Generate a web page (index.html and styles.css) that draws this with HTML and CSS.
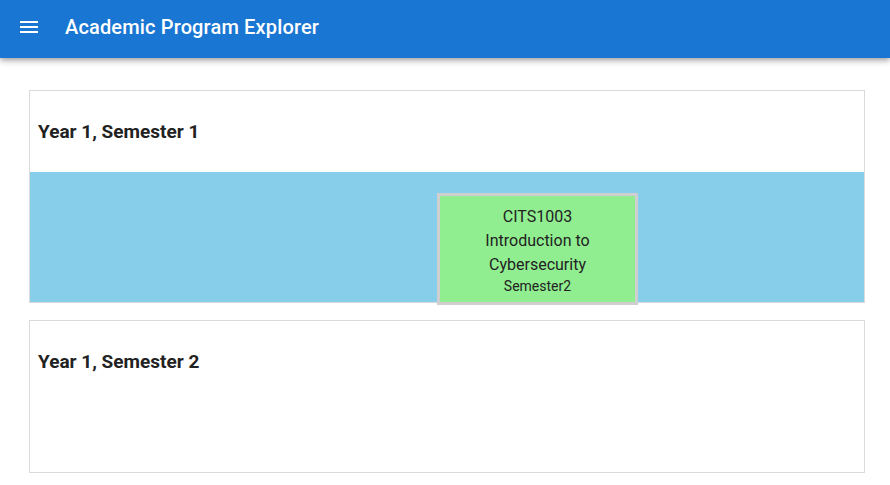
FILE: index.html
```html
<!DOCTYPE html>
<html>
<head>
<meta charset="utf-8">
<link rel="stylesheet" href="styles.css">
</head>
<body>
<header class="appbar">
  <svg class="menu" width="24" height="24" viewBox="0 0 24 24"><path d="M3 18h18v-2H3v2zm0-5h18v-2H3v2zm0-7v2h18V6H3z" fill="#fff"/></svg>
  <h1 class="title">Academic Program Explorer</h1>
</header>
<main class="content">
  <section class="card">
    <h2 class="card-title">Year 1, Semester 1</h2>
    <div class="drop drop-active">
      <div class="unit">
        <div class="unit-line">CITS1003</div>
        <div class="unit-line">Introduction to</div>
        <div class="unit-line">Cybersecurity</div>
        <div class="unit-sem">Semester2</div>
      </div>
    </div>
  </section>
  <section class="card">
    <h2 class="card-title">Year 1, Semester 2</h2>
    <div class="drop"></div>
  </section>
</main>
</body>
</html>
```
FILE: styles.css
```css
* { box-sizing: border-box; }
body {
  margin: 0;
  font-family: Roboto, "Liberation Sans", sans-serif;
  background: #fff;
  color: #222;
}
.appbar {
  height: 58px;
  background: #1976d2;
  display: flex;
  align-items: center;
  padding: 0 0 5px 17px;
  box-shadow: 0 2px 4px -1px rgba(0,0,0,0.2), 0 4px 5px 0 rgba(0,0,0,0.14), 0 1px 10px 0 rgba(0,0,0,0.12);
}
.menu { display: block; }
.title {
  margin: 0 0 0 24px;
  color: #fff;
  font-size: 20px;
  font-weight: 500;
  letter-spacing: 0.15px;
}
.content {
  padding: 32px 25px 0 29px;
  display: flex;
  flex-direction: column;
  gap: 17px;
}
.card {
  border: 1px solid #dadada;
  background: #fff;
}
.card-title {
  margin: 0;
  padding: 29px 8px;
  font-size: 19px;
  line-height: 23px;
  font-weight: 700;
  color: #222;
}
.drop {
  height: 70px;
}
.drop-active {
  height: 130px;
  background: #87ceeb;
  padding: 21px 0 0 407px;
}
.unit {
  width: 201px;
  height: 112px;
  background: #90ee90;
  border: 3px solid #cfcfcf;
  padding: 9px 0 7px;
  text-align: center;
  color: #222;
}
.unit-line {
  font-size: 16px;
  line-height: 24px;
}
.unit-sem {
  font-size: 14px;
  line-height: 18px;
}
```
